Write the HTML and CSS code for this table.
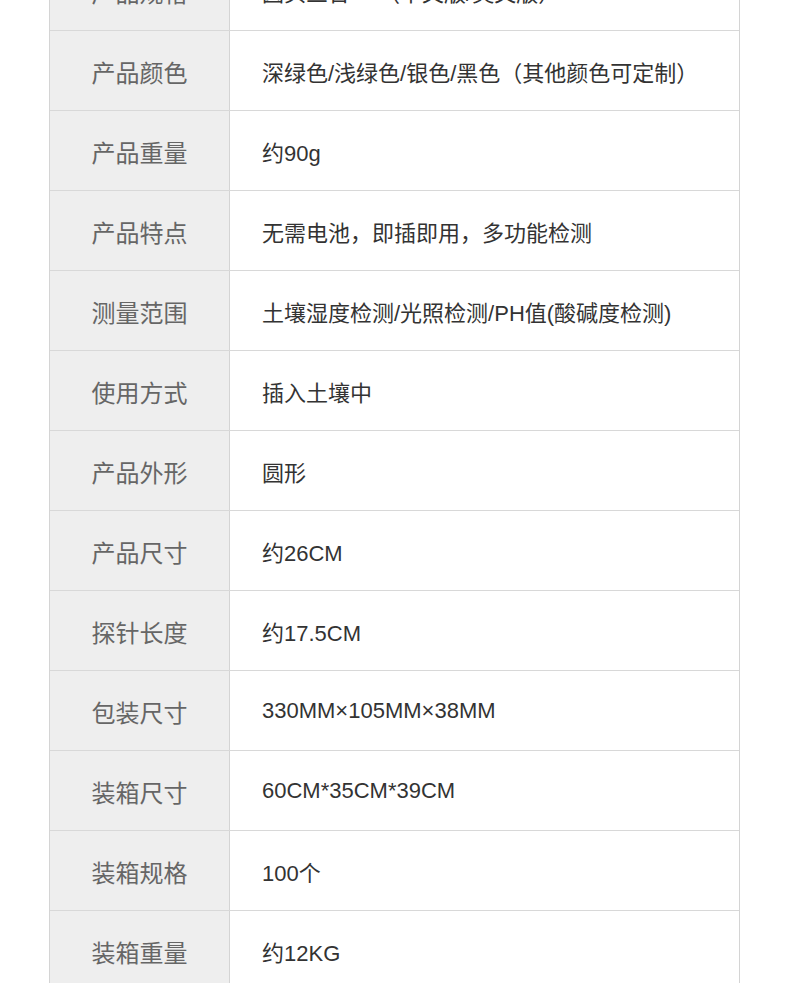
FILE: index.html
```html
<!DOCTYPE html>
<html lang="zh-CN">
<head>
  <meta charset="UTF-8">
  <meta name="viewport" content="width=device-width, initial-scale=1.0">
  <title>产品参数</title>
  <link rel="stylesheet" href="styles.css">
</head>
<body>
  <div class="spec-table">
    <div class="spec-row">
      <div class="spec-label">产品规格</div>
      <div class="spec-value">圆头三合一 （中文版/英文版）</div>
    </div>
    <div class="spec-row">
      <div class="spec-label">产品颜色</div>
      <div class="spec-value">深绿色/浅绿色/银色/黑色（其他颜色可定制）</div>
    </div>
    <div class="spec-row">
      <div class="spec-label">产品重量</div>
      <div class="spec-value">约90g</div>
    </div>
    <div class="spec-row">
      <div class="spec-label">产品特点</div>
      <div class="spec-value">无需电池，即插即用，多功能检测</div>
    </div>
    <div class="spec-row">
      <div class="spec-label">测量范围</div>
      <div class="spec-value">土壤湿度检测/光照检测/PH值(酸碱度检测)</div>
    </div>
    <div class="spec-row">
      <div class="spec-label">使用方式</div>
      <div class="spec-value">插入土壤中</div>
    </div>
    <div class="spec-row">
      <div class="spec-label">产品外形</div>
      <div class="spec-value">圆形</div>
    </div>
    <div class="spec-row">
      <div class="spec-label">产品尺寸</div>
      <div class="spec-value">约26CM</div>
    </div>
    <div class="spec-row">
      <div class="spec-label">探针长度</div>
      <div class="spec-value">约17.5CM</div>
    </div>
    <div class="spec-row">
      <div class="spec-label">包装尺寸</div>
      <div class="spec-value">330MM×105MM×38MM</div>
    </div>
    <div class="spec-row">
      <div class="spec-label">装箱尺寸</div>
      <div class="spec-value">60CM*35CM*39CM</div>
    </div>
    <div class="spec-row">
      <div class="spec-label">装箱规格</div>
      <div class="spec-value">100个</div>
    </div>
    <div class="spec-row">
      <div class="spec-label">装箱重量</div>
      <div class="spec-value">约12KG</div>
    </div>
  </div>
</body>
</html>
```

FILE: styles.css
```css
body {
  margin: 0;
  background-color: #fff;
  font-family: "Liberation Sans", "Noto Sans CJK SC", sans-serif;
  overflow: hidden;
}

.spec-table {
  width: 691px;
  margin: -49px 0 0 49px;
  box-sizing: border-box;
  border-left: 1px solid #d4d4d4;
  border-right: 1px solid #d4d4d4;
}

.spec-row {
  display: flex;
  height: 80px;
  box-sizing: border-box;
  border-bottom: 1px solid #d8d8d8;
}

.spec-label {
  width: 180px;
  flex-shrink: 0;
  display: flex;
  align-items: center;
  justify-content: center;
  padding-top: 1px;
  box-sizing: border-box;
  background-color: #eeeeee;
  border-right: 1px solid #d4d4d4;
  color: #666;
  font-size: 24px;
}

.spec-value {
  flex: 1;
  display: flex;
  align-items: center;
  padding: 1px 0 0 32px;
  color: #333;
  font-size: 22px;
}
```
